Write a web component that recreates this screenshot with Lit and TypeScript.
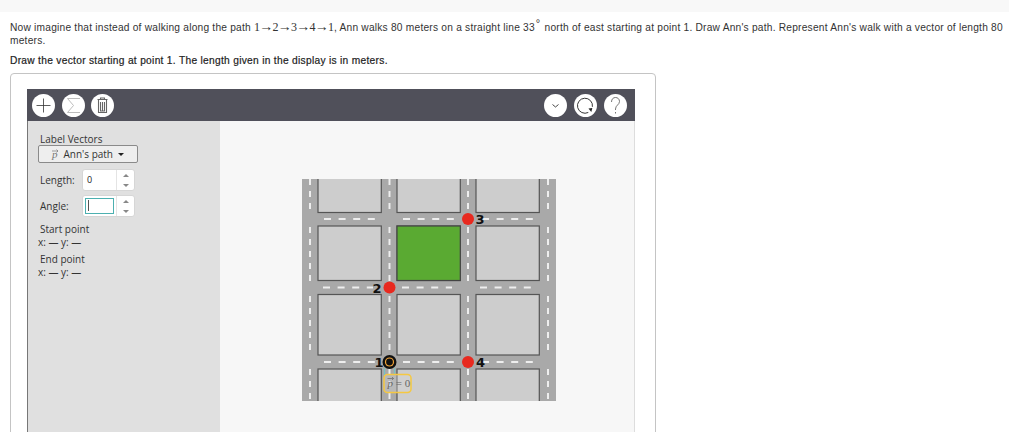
import { LitElement, html, css, svg } from "lit";
import { customElement } from "lit/decorators.js";

const hDashes: [number, number, number][] = [
  [219, 324, 375], [219, 403, 454], [219, 482, 533],
  [287.5, 323, 373], [287.5, 402, 452], [287.5, 480, 532],
  [362, 324, 375], [362, 403, 454], [362, 482, 533],
];
const vSpans: [number, number][] = [[179, 212], [227, 281], [296, 355], [369, 401]];
const blocksX = [318, 397, 476];
const blocksY: [number, number][] = [[160, 212.5], [226, 280.5], [294.5, 355], [369, 420]];

@customElement("app-root")
export class AppRoot extends LitElement {
  static styles = css`
    :host { display: block; width: 1024px; height: 432px; overflow: hidden; background: #fff; font-family: "Liberation Sans", Arial, sans-serif; color: #333; }
    .band { width: 1009px; height: 12px; background: #f8f8f8; }
    .prompt { padding: 9px 0 0 10px; font-size: 10.2px; line-height: 13px; letter-spacing: 0.22px; }
    .line { height: 13px; white-space: nowrap; }
    .math { font-family: "Liberation Serif", serif; font-size: 12px; letter-spacing: 0; line-height: 13px; }
    .arrow { font-size: 14px; margin: 0 -0.75px; line-height: 10px; }
    sup { font-size: 11px; line-height: 0; padding: 0 1px 0 1px; }
    .ask { margin: 7px 0 0 10px; font-size: 10.2px; line-height: 13px; letter-spacing: 0.3px; color: #222; -webkit-text-stroke: 0.2px #222; }
    .card { margin: 6px 0 0 10px; width: 646px; height: 400px; box-sizing: border-box; border: 1px solid #c4c4c4; border-radius: 4px; padding: 15px 20px 0 16px; }
    .app { width: 608px; display: flex; flex-direction: column; }
    .toolbar { height: 32px; background: #50505a; display: flex; align-items: center; justify-content: space-between; padding: 0 8px 0 5px; }
    .group { display: flex; gap: 6.5px; }
    .group.right { gap: 7px; }
    .tb { width: 23px; height: 23px; border-radius: 50%; background: #fff; display: block; flex: none; }
    .body { display: flex; height: 320px; border-right: 1px solid #ddd; }
    .side { width: 193px; box-sizing: border-box; border-left: 1px solid #777; background: #e0e0e0; padding: 12px 0 0 10px; font-family: "Open Sans", sans-serif; font-size: 10px; color: #333; flex: none; }
    .lbl { padding-left: 2px; line-height: 12px; }
    .dd { width: 100px; height: 18px; box-sizing: border-box; border: 1px solid #8a8a8a; border-radius: 2px; background: #eee; display: flex; align-items: center; justify-content: center; gap: 6px; }
    .vec { position: relative; font-family: "Liberation Serif", serif; font-style: italic; color: #777; font-size: 11px; }
    .vec svg { position: absolute; left: 0; top: 1px; }
    .caret { width: 0; height: 0; border: 3px solid transparent; border-top: 3px solid #222; border-bottom: 0; margin-left: -1px; }
    .row { display: flex; align-items: center; margin-top: 6px; height: 22px; padding-left: 2px; }
    .row + .row { margin-top: 4px; }
    .row > span { width: 42px; flex: none; }
    .spin { width: 53px; height: 22px; box-sizing: border-box; background: #fff; border: 1px solid #d6d6d6; border-radius: 3px; display: flex; }
    .val { flex: 1; padding-left: 4px; line-height: 20px; font-size: 9px; color: #222; }
    .focus { flex: 1; margin: 2px; border: 1.5px solid #4cb0b0; box-sizing: border-box; }
    .cursor { width: 1px; height: 11px; background: #555; margin: 1px 0 0 2px; }
    .btns { width: 17px; border-left: 1px solid #e4e4e4; display: flex; flex-direction: column; align-items: center; justify-content: center; gap: 7px; }
    .up, .down { width: 0; height: 0; border: 3px solid transparent; }
    .up { border-bottom: 3px solid #888; border-top: 0; }
    .down { border-top: 3px solid #888; border-bottom: 0; }
    .pt { margin-top: 6px; line-height: 13px; }
    .xy { line-height: 13px; padding-top: 1px; }
    .pt + .pt { margin-top: 4px; }
    .canvas { flex: 1; background: #f7f7f7; padding: 58px 0 0 82px; }
    .map { display: block; }
    .num { font-family: "DejaVu Sans", sans-serif; font-weight: 700; font-size: 13px; fill: #111; }
    .plabel { font-family: "Liberation Serif", serif; font-size: 11px; fill: #666; }
    .plabel .it { font-style: italic; }
  `;

  private map() {
    return html`<svg class="map" width="254" height="222" viewBox="302 179 254 222">
      <rect x="302" y="179" width="254" height="222" fill="#a9a9a9"></rect>
      ${blocksX.map((x) => blocksY.map(([a, b]) => svg`<rect x=${x} y=${a} width="63.3" height=${b - a} fill="#cdcdcd" stroke="#555" stroke-width="1.2"></rect>`))}
      <rect x="397" y="226" width="63.3" height="54.5" fill="#5aaa32" stroke="#444" stroke-width="1.2"></rect>
      ${hDashes.map(([y, a, b]) => svg`<line x1=${a} x2=${b} y1=${y} y2=${y} stroke="#eee" stroke-width="2" stroke-dasharray="7 7.6"></line>`)}
      ${[310, 389.5, 468, 548].map((x) => vSpans.map(([a, b]) => svg`<line x1=${x} x2=${x} y1=${a} y2=${b} stroke="#eee" stroke-width="2" stroke-dasharray="6 6"></line>`))}
      <line x1="384.5" x2="384.5" y1="368" y2="375" stroke="#6cc" stroke-width="0.8"></line>
      <line x1="394.5" x2="394.5" y1="368" y2="375" stroke="#6cc" stroke-width="0.8"></line>
      <rect x="384" y="374.5" width="27" height="18" rx="3.5" fill="#d8d8d8" fill-opacity="0.35" stroke="#f5c842" stroke-width="1.5"></rect>
      <path d="M387.5 378.5h6M392 377l1.5 1.5-1.5 1.5" stroke="#666" stroke-width="0.7" fill="none"></path>
      <text class="plabel" x="387.5" y="387"><tspan class="it">p</tspan> = 0</text>
      <circle cx="468" cy="219" r="6" fill="#e8291f"></circle>
      <circle cx="389.5" cy="287.5" r="6" fill="#e8291f"></circle>
      <circle cx="468" cy="362" r="6" fill="#e8291f"></circle>
      <circle cx="389.5" cy="362" r="7" fill="#111"></circle>
      <circle cx="389.5" cy="362" r="4.6" fill="#f5a63a"></circle>
      <circle cx="389.5" cy="362" r="3.4" fill="#111"></circle>
      <text class="num" x="475.5" y="224">3</text>
      <text class="num" x="372.5" y="292.5">2</text>
      <text class="num" x="374.5" y="367">1</text>
      <text class="num" x="476" y="367">4</text>
    </svg>`;
  }

  render() {
    const a = html`<span class="arrow">→</span>`;
    return html`
      <div class="band"></div>
      <div class="prompt">
        <div class="line">Now imagine that instead of walking along the path <span class="math">1${a}2${a}3${a}4${a}1</span>, Ann walks 80 meters on a straight line 33<sup>°</sup> north of east starting at point 1. Draw Ann's path. Represent Ann's walk with a vector of length 80</div>
        <div class="line">meters.</div>
      </div>
      <div class="ask">Draw the vector starting at point 1. The length given in the display is in meters.</div>
      <div class="card">
        <div class="app">
          <div class="toolbar">
            <div class="group">
              <svg class="tb" viewBox="0 0 23 23"><path d="M11.5 4.5v14M4.5 11.5h14" stroke="#333" stroke-width="0.8" fill="none"></path></svg>
              <svg class="tb" viewBox="0 0 23 23"><path d="M18 4.5H5.5l6 7-6 7H18" stroke="#b5b5b5" stroke-width="0.9" fill="none"></path></svg>
              <svg class="tb" viewBox="0 0 23 23"><path d="M9.5 5.5V4h4v1.5M6.5 5.5h10M7.5 6v12.5h8V6M9.5 8v9h4V8M11.5 8v9" stroke="#666" stroke-width="1.1" fill="none"></path></svg>
            </div>
            <div class="group right">
              <svg class="tb" viewBox="0 0 23 23"><path d="M8.5 10.5l3 2.5 3-2.5" stroke="#333" stroke-width="0.9" fill="none"></path></svg>
              <svg class="tb" viewBox="0 0 23 23"><path d="M16 17.5A7.5 7.5 0 1 1 18.5 11" stroke="#333" stroke-width="0.9" fill="none" transform="rotate(15 11.5 11.5)"></path><path d="M14.5 14.5l2.8 3.6 1-4.2z" fill="#222"></path></svg>
              <svg class="tb" viewBox="0 0 23 23"><path d="M7.5 8C7.5 5 9.3 3.5 11.5 3.5S15.5 5 15.5 7.5c0 3.2-4 3.8-4 7.5V16M11.5 18v1.5" stroke="#555" stroke-width="0.8" fill="none"></path></svg>
            </div>
          </div>
          <div class="body">
            <div class="side">
              <div class="lbl">Label Vectors</div>
              <div class="dd"><span class="vec">p<svg width="7" height="4" viewBox="0 0 7 4"><path d="M0 2h6M4.5 .5L6 2 4.5 3.5" stroke="#777" stroke-width="0.7" fill="none"></path></svg></span><span>Ann's path</span><div class="caret"></div></div>
              <div class="row"><span>Length:</span><div class="spin"><div class="val">0</div><div class="btns"><div class="up"></div><div class="down"></div></div></div></div>
              <div class="row"><span>Angle:</span><div class="spin"><div class="focus"><div class="cursor"></div></div><div class="btns"><div class="up"></div><div class="down"></div></div></div></div>
              <div class="pt"><div class="lbl">Start point</div><div class="xy">x: — y: —</div></div>
              <div class="pt"><div class="lbl">End point</div><div class="xy">x: — y: —</div></div>
            </div>
            <div class="canvas">${this.map()}</div>
          </div>
        </div>
      </div>
    `;
  }
}
